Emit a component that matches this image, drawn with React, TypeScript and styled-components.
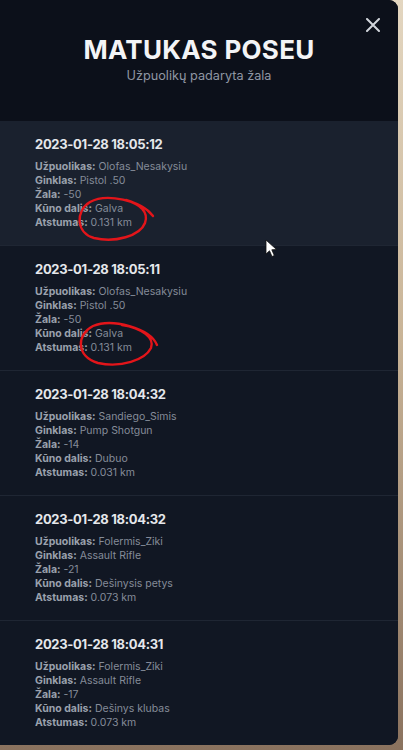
import React, { FC } from "react";
import styled, { createGlobalStyle } from "styled-components";

const GlobalStyle = createGlobalStyle`
  html, body {
    margin: 0;
    padding: 0;
    background: linear-gradient(to bottom, #e3d6c0 0%, #c9b497 45%, #8a725e 100%);
    font-family: Inter, "Noto Sans", "Liberation Sans", sans-serif;
    height: 750px;
    overflow: hidden;
  }
`;

const Modal = styled.div`
  position: relative;
  width: 398px;
  height: 745px;
  background: #111723;
  border-radius: 0 9px 9px 0;
  overflow: hidden;
  display: flex;
  flex-direction: column;
`;

const Header = styled.div`
  position: relative;
  height: 121px;
  flex-shrink: 0;
  background: #0c101a;
  display: flex;
  flex-direction: column;
  align-items: center;
  padding-top: 35px;
  box-sizing: border-box;
`;

const Title = styled.h1`
  margin: 0;
  font-size: 26px;
  line-height: 30px;
  font-weight: 700;
  letter-spacing: 0.3px;
  color: #f3f4f6;
`;

const Subtitle = styled.div`
  margin-top: 3px;
  font-size: 12.7px;
  line-height: 16px;
  color: #8f96a3;
`;

const CloseButton = styled.button`
  position: absolute;
  top: 16px;
  right: 16px;
  width: 18px;
  height: 18px;
  padding: 0;
  border: none;
  background: transparent;
  cursor: pointer;
  display: flex;
  align-items: center;
  justify-content: center;
`;

const List = styled.div`
  display: flex;
  flex-direction: column;
`;

const Row = styled.div<{ $active?: boolean }>`
  height: 125px;
  box-sizing: border-box;
  padding: 15px 35px 15px;
  background: ${(p) => (p.$active ? "#1a212e" : "#111723")};
  border-bottom: 1px solid #1f2633;
`;

const DateLine = styled.div`
  font-size: 13px;
  line-height: 16px;
  font-weight: 700;
  letter-spacing: -0.3px;
  color: #e5e7eb;
`;

const Details = styled.div`
  margin-top: 8px;
  display: flex;
  flex-direction: column;
`;

const Line = styled.div`
  font-size: 10.5px;
  line-height: 14px;
  color: #858c99;
`;

const Label = styled.span`
  font-weight: 700;
  color: #9aa1ad;
`;

const Overlay = styled.svg`
  position: absolute;
  left: 0;
  top: 0;
  pointer-events: none;
`;

type Hit = {
  date: string;
  attacker: string;
  weapon: string;
  damage: string;
  part: string;
  distance: string;
};

const hits: Hit[] = [
  { date: "2023-01-28 18:05:12", attacker: "Olofas_Nesakysiu", weapon: "Pistol .50", damage: "-50", part: "Galva", distance: "0.131 km" },
  { date: "2023-01-28 18:05:11", attacker: "Olofas_Nesakysiu", weapon: "Pistol .50", damage: "-50", part: "Galva", distance: "0.131 km" },
  { date: "2023-01-28 18:04:32", attacker: "Sandiego_Simis", weapon: "Pump Shotgun", damage: "-14", part: "Dubuo", distance: "0.031 km" },
  { date: "2023-01-28 18:04:32", attacker: "Folermis_Ziki", weapon: "Assault Rifle", damage: "-21", part: "Dešinysis petys", distance: "0.073 km" },
  { date: "2023-01-28 18:04:31", attacker: "Folermis_Ziki", weapon: "Assault Rifle", damage: "-17", part: "Dešinys klubas", distance: "0.073 km" },
];

const HitRow: FC<{ hit: Hit; active?: boolean }> = ({ hit, active }) => (
  <Row $active={active}>
    <DateLine>{hit.date}</DateLine>
    <Details>
      <Line><Label>Užpuolikas:</Label> {hit.attacker}</Line>
      <Line><Label>Ginklas:</Label> {hit.weapon}</Line>
      <Line><Label>Žala:</Label> {hit.damage}</Line>
      <Line><Label>Kūno dalis:</Label> {hit.part}</Line>
      <Line><Label>Atstumas:</Label> {hit.distance}</Line>
    </Details>
  </Row>
);

export default function App() {
  return (
    <>
      <GlobalStyle />
      <Modal>
        <Header>
          <Title>MATUKAS POSEU</Title>
          <Subtitle>Užpuolikų padaryta žala</Subtitle>
          <CloseButton aria-label="Uždaryti">
            <svg width="14" height="14" viewBox="0 0 14 14">
              <path d="M1 1 L13 13 M13 1 L1 13" stroke="#d1d5db" strokeWidth="2" strokeLinecap="round" />
            </svg>
          </CloseButton>
        </Header>
        <List>
          {hits.map((h, i) => (
            <HitRow key={i} hit={h} active={i === 0} />
          ))}
        </List>

        {/* hand-drawn red marks + mouse cursor lying over the list */}
        <Overlay width="398" height="745" viewBox="0 0 398 745">
          <path
            d="M153 216 C141 200 106 193 90 202 C75 211 76 233 94 238 C115 243 140 236 145 223 C149 212 140 204 126 200"
            fill="none"
            stroke="#e3151a"
            strokeWidth="2.4"
            strokeLinecap="round"
          />
          <path
            d="M157 345 C150 328 112 318 93 326 C77 334 75 356 98 363 C121 368 145 360 151 348 C155 338 142 328 122 325"
            fill="none"
            stroke="#e3151a"
            strokeWidth="2.4"
            strokeLinecap="round"
          />
          <path
            d="M266 240 L266 254 L269.5 250.8 L272 256.5 L274.3 255.5 L271.8 249.8 L276.5 249.5 Z"
            fill="#ffffff"
            stroke="#111111"
            strokeWidth="0.8"
            strokeLinejoin="round"
          />
        </Overlay>
      </Modal>
    </>
  );
}
